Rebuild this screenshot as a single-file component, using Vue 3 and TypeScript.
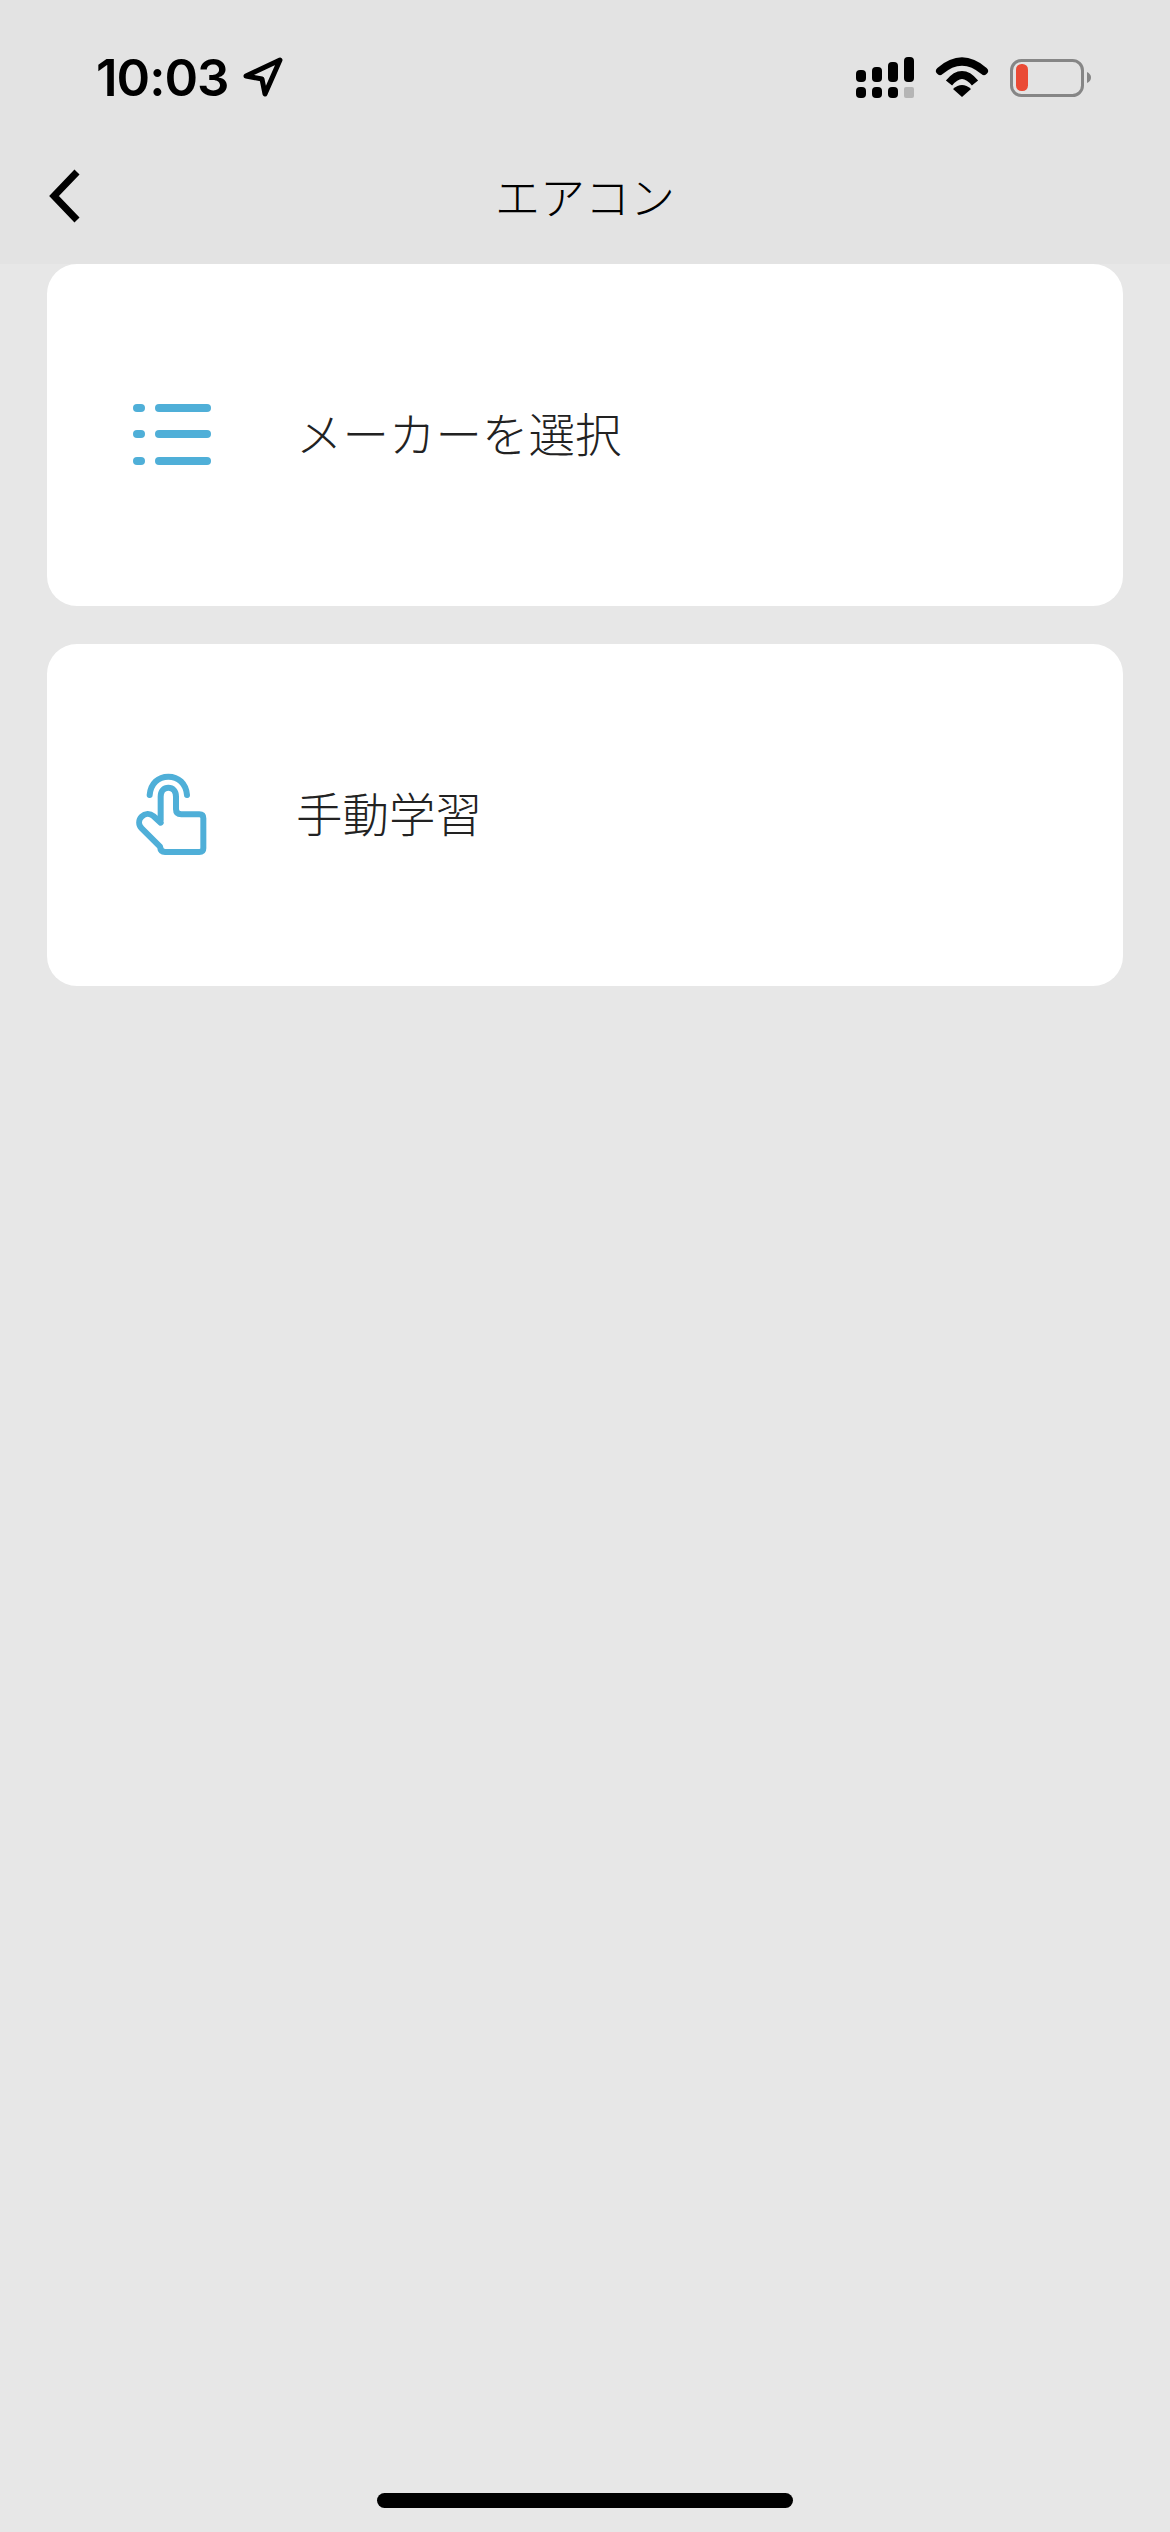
<script setup lang="ts">
/** エアコンの追加方法を選ぶ画面 */
interface Option {
  id: 'list' | 'hand'
  label: string
}

const options: Option[] = [
  { id: 'list', label: 'メーカーを選択' },
  { id: 'hand', label: '手動学習' }
]

// 電波アイコンの列
const signalBars = [
  { x: 856, y: 70, h: 12 },
  { x: 872, y: 67, h: 15 },
  { x: 888, y: 62, h: 20 },
  { x: 904, y: 57, h: 25 }
]
const listRows = [33, 59, 86]
</script>

<template>
  <div class="page">
    <header class="header">
      <div class="status-bar">
        <div class="time-group">
          <span class="time">10:03</span>
          <svg class="location" width="42" height="42" viewBox="0 0 42 42">
            <path d="M4 20 L38 4 L23 38 L20 23 Z" fill="none" stroke="#000" stroke-width="5" stroke-linejoin="round" />
          </svg>
        </div>
        <svg class="status-icons" width="250" height="60" viewBox="850 47 250 60">
          <rect v-for="bar in signalBars" :key="bar.x" :x="bar.x" :y="bar.y" width="10" :height="bar.h" rx="4" fill="#000" />
          <rect x="856" y="87" width="10" height="11" rx="4" fill="#000" />
          <rect x="872" y="87" width="10" height="11" rx="4" fill="#000" />
          <rect x="888" y="87" width="10" height="11" rx="4" fill="#000" />
          <rect x="904" y="87" width="10" height="11" rx="2" fill="#b5b5b5" />
          <path d="M940 71 Q962 52 984 71" fill="none" stroke="#000" stroke-width="8" stroke-linecap="round" />
          <path d="M949 83 Q962 67 975 83" fill="none" stroke="#000" stroke-width="8" stroke-linecap="butt" />
          <path d="M953 89 Q962 81 971 89 L962 97 Z" fill="#000" />
          <rect x="1011.500" y="60.500" width="71" height="35" rx="10" fill="none" stroke="#868686" stroke-width="3" />
          <rect x="1016" y="64" width="12" height="27" rx="5.500" fill="#ea4a35" />
          <path d="M1087 72 Q1091 74 1091 77.500 Q1091 81 1087 83 Z" fill="#868686" />
        </svg>
      </div>
      <nav class="nav">
        <svg class="back" width="36" height="56" viewBox="0 0 36 56">
          <path d="M31 4 L8 28 L31 52" fill="none" stroke="#000" stroke-width="7" />
        </svg>
        <h1 class="title">エアコン</h1>
        <span></span>
      </nav>
    </header>

    <main class="options">
      <div v-for="option in options" :key="option.id" class="card">
        <svg v-if="option.id === 'list'" class="icon" width="120" height="120" viewBox="0 0 120 120">
          <g v-for="y in listRows" :key="y" stroke="#4fafd8" stroke-width="8" stroke-linecap="round">
            <line x1="27" :y1="y" x2="31" :y2="y" />
            <line x1="49" :y1="y" x2="97" :y2="y" />
          </g>
        </svg>
        <svg v-else class="icon" width="120" height="120" viewBox="0 15 360 360">
          <g fill="none" stroke="#4fafd8" stroke-width="18" stroke-linecap="round" stroke-linejoin="round">
            <path d="M119 135 C122 100 145 80 175 80 C205 80 228 100 231 135" />
            <path d="M152 210 L152 140 C152 122 162 113 175 113 C188 113 198 122 198 140 L198 178 C198 188 204 193 214 193 L268 193 C276 193 280 197 280 205 L280 295 C280 302 276 306 268 306 L165 306 C156 306 151 300 150 290 L95 235 C85 225 85 210 95 200 C105 190 120 190 130 198 L152 218" />
          </g>
        </svg>
        <span class="label">{{ option.label }}</span>
      </div>
    </main>

    <div class="home-bar"></div>
  </div>
</template>

<style>
html,
body {
  margin: 0;
  background: #e7e7e7;
}
</style>

<style scoped>
.page {
  display: flex;
  flex-direction: column;
  width: 1170px;
  height: 2532px;
  overflow: hidden;
  background: #e7e7e7;
  font-family: "Noto Sans CJK JP", sans-serif;
}

.header {
  height: 264px;
  background: #e3e3e3;
}

.status-bar {
  display: flex;
  align-items: center;
  justify-content: space-between;
  height: 154px;
  padding: 0 70px 0 96px;
}

.time-group {
  display: flex;
  align-items: center;
  gap: 13px;
}

.time {
  font-family: Inter, sans-serif;
  font-size: 51px;
  font-weight: 600;
  letter-spacing: -1px;
  color: #000;
}

.nav {
  display: grid;
  grid-template-columns: 1fr auto 1fr;
  align-items: center;
  height: 84px;
  padding: 0 46px;
}

.back {
  display: block;
}

.title {
  margin: 0;
  font-size: 45px;
  font-weight: 300;
  line-height: 60px;
  color: #000;
}

.options {
  display: flex;
  flex-direction: column;
  gap: 38px;
  padding: 0 47px;
}

.card {
  display: flex;
  align-items: center;
  gap: 66px;
  height: 342px;
  padding-left: 63px;
  background: #fff;
  border-radius: 30px;
}

.icon {
  flex: none;
}

.label {
  margin-bottom: 8px;
  font-size: 46.500px;
  font-weight: 300;
  color: #222;
}

.home-bar {
  width: 416px;
  height: 15px;
  margin: auto auto 24px;
  background: #000;
  border-radius: 8px;
}
</style>
